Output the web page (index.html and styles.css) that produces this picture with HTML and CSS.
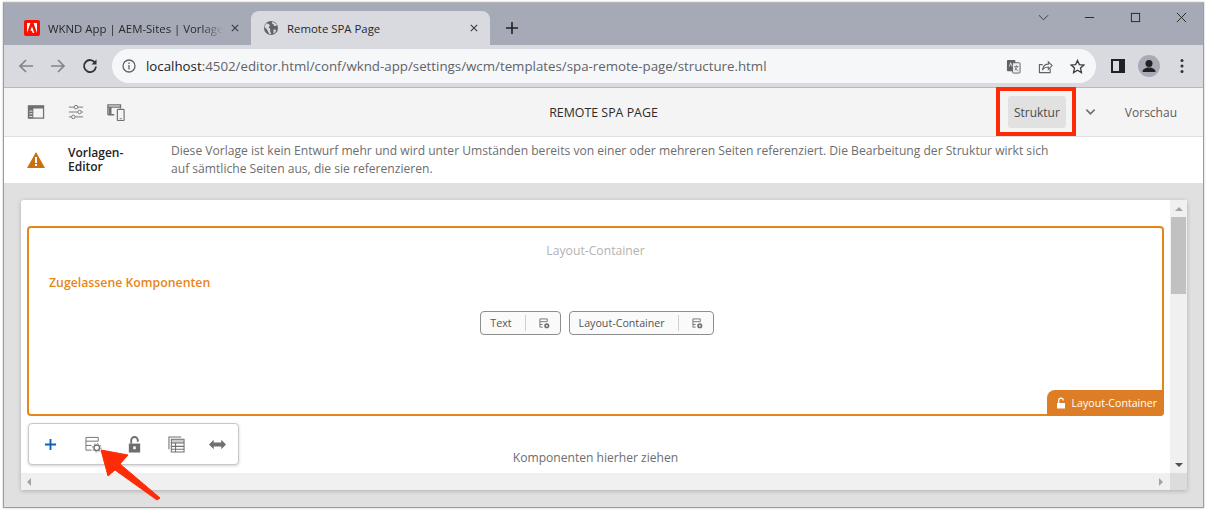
FILE: index.html
```html
<!DOCTYPE html>
<html lang="en">
<head>
    <meta charset="UTF-8">
    <meta name="viewport" content="width=device-width, initial-scale=1.0">
    <title>Remote SPA Page</title>
    <link rel="stylesheet" href="styles.css">
</head>
<body>
    <div class="window">
        <div class="tabstrip">
            <div class="tab">
                <svg class="favicon" viewBox="0 0 16 16"><rect width="16" height="16" rx="2" fill="#fa0f00"/><path d="M6.500 3H3v10zM9.500 3H13v10zM8 6.500l2.300 6.500H8.800L8 10.800H6.300z" fill="#fff"/></svg>
                <span class="tab-title tab-title-fade">WKND App | AEM-Sites | Vorlage</span>
                <svg class="tab-close" viewBox="0 0 10 10"><path d="M1 1l8 8M9 1L1 9" stroke="#3c4043" stroke-width="1.5"/></svg>
            </div>
            <div class="tab tab-active">
                <svg class="favicon" viewBox="0 0 16 16"><circle cx="8" cy="8" r="7" fill="#5f6368"/><path d="M3 3.500l2.500.3L7 5.600 5.600 7.400l1.600 1.400v2.800l1.200 2.600-2.200-.2L4 9.500 1.500 7zM9.500 1.500l-.7 2 1.500.6.7 1.800 2.200-.2L14 4.500zM10.500 9.500l2.700.3-1 2.700-1.700 1z" fill="#d9dae0"/></svg>
                <span class="tab-title">Remote SPA Page</span>
                <svg class="tab-close" viewBox="0 0 10 10"><path d="M1 1l8 8M9 1L1 9" stroke="#3c4043" stroke-width="1.5"/></svg>
            </div>
            <svg class="new-tab" viewBox="0 0 12 12"><path d="M6 0v12M0 6h12" stroke="#202124" stroke-width="1.600"/></svg>
            <div class="win-controls">
                <svg viewBox="0 0 12 12" class="win-chevron"><path d="M1 3.500l5 5 5-5" fill="none" stroke="#333" stroke-width="1"/></svg>
                <svg viewBox="0 0 12 12" class="win-min"><path d="M1 6h10" stroke="#222" stroke-width="1"/></svg>
                <svg viewBox="0 0 12 12" class="win-max"><rect x="1.500" y="1.500" width="9" height="9" fill="none" stroke="#222" stroke-width="1"/></svg>
                <svg viewBox="0 0 12 12" class="win-close"><path d="M1 1l10 10M11 1L1 11" stroke="#222" stroke-width="1"/></svg>
            </div>
        </div>

        <div class="browser-bar">
            <svg class="nav-icon" viewBox="0 0 16 16"><path d="M15 8H2M8 2L2 8l6 6" fill="none" stroke="#80868b" stroke-width="1.700"/></svg>
            <svg class="nav-icon" viewBox="0 0 16 16"><path d="M1 8h13M8 2l6 6-6 6" fill="none" stroke="#80868b" stroke-width="1.700"/></svg>
            <svg class="nav-icon" viewBox="0 0 16 16"><path d="M13.200 5A6 6 0 1 0 14 8.500" fill="none" stroke="#303134" stroke-width="1.800"/><path d="M14.500 1.500v5h-5z" fill="#303134"/></svg>
            <div class="omnibox">
                <svg class="info-icon" viewBox="0 0 14 14"><circle cx="7" cy="7" r="6" fill="none" stroke="#5f6368" stroke-width="1.300"/><path d="M7 6v4.500M7 3.500v1.500" stroke="#5f6368" stroke-width="1.300"/></svg>
                <span class="url"><b>localhost</b>:4502/editor.html/conf/wknd-app/settings/wcm/templates/spa-remote-page/structure.html</span>
                <div class="omni-actions">
                    <svg viewBox="0 0 16 16"><rect x="1" y="1" width="9" height="12" rx="1" fill="#5f6368"/><rect x="7" y="4" width="8" height="11" rx="1" fill="#eee" stroke="#5f6368"/><path d="M3.500 8l1.500-4 1.500 4" fill="none" stroke="#fff" stroke-width=".8"/><path d="M9 8h4M11 6.500v1M12.500 8l-3 4M9.500 8.500c.5 2 2 3.500 3.500 4" fill="none" stroke="#5f6368" stroke-width=".8"/></svg>
                    <svg viewBox="0 0 16 16"><path d="M13 10v4.500H1.500V6H5" fill="none" stroke="#5f6368" stroke-width="1.200"/><path d="M5 11c.5-3.500 3-5.500 6-5.500V3l4 4-4 4V8.500c-2.500 0-4.500.8-6 2.500z" fill="none" stroke="#5f6368" stroke-width="1.200"/></svg>
                    <svg viewBox="0 0 16 16"><path d="M8 1.500l2 4.500 4.800.5-3.600 3.200 1 4.800L8 12l-4.200 2.500 1-4.800L1.200 6.500 6 6z" fill="none" stroke="#3c4043" stroke-width="1.400"/></svg>
                </div>
            </div>
            <div class="browser-actions">
                <svg class="side-icon" viewBox="0 0 14 14"><path d="M0 0h14v14H0zM2 2v10h6V2z" fill="#202124" fill-rule="evenodd"/></svg>
                <svg class="avatar" viewBox="0 0 22 22"><circle cx="11" cy="11" r="11" fill="#a8abb6"/><circle cx="11" cy="8.500" r="3.500" fill="#202124"/><path d="M4.500 17c0-3 3-4.500 6.500-4.500s6.500 1.500 6.500 4.500z" fill="#202124"/></svg>
                <svg class="kebab" viewBox="0 0 4 16"><circle cx="2" cy="2.500" r="1.500" fill="#303134"/><circle cx="2" cy="8" r="1.500" fill="#303134"/><circle cx="2" cy="13.500" r="1.500" fill="#303134"/></svg>
            </div>
        </div>

        <div class="editor-bar">
            <div class="editor-tools">
                <svg viewBox="0 0 20 18" class="tool-panel"><path d="M1.500 2h17v14h-17z" fill="none" stroke="#707070" stroke-width="1.400"/><path d="M1.500 2h17v3h-17zM1.500 5h5.500v11h-5.500z" fill="#707070"/><path d="M2.500 8h3.500M2.500 11h3.500M2.500 14h3.500" stroke="#f4f4f4"/></svg>
                <svg viewBox="0 0 18 18" class="tool-sliders"><g fill="none" stroke="#707070" stroke-width="1"><path d="M1 3.500h6M11 3.500h6M1 9h10M15 9h2M1 14.500h3M8 14.500h9"/><circle cx="9" cy="3.500" r="2"/><circle cx="13" cy="9" r="2"/><circle cx="6" cy="14.500" r="2"/></g></svg>
                <svg viewBox="0 0 20 20" class="tool-devices"><path d="M1 13V2h14v4M1 2h14v2.500H1zM1 13h7" fill="none" stroke="#707070" stroke-width="1.500"/><rect x="11.500" y="7" width="7.500" height="12.500" rx="1" fill="#f4f4f4" stroke="#707070" stroke-width="1.300"/><path d="M14 17.500h2.500" stroke="#707070"/><path d="M2 4.500h3v8H2z" fill="#707070"/></svg>
            </div>
            <div class="editor-title">REMOTE SPA PAGE</div>
            <div class="editor-modes">
                <span class="mode mode-active">Struktur</span>
                <svg class="mode-chevron" viewBox="0 0 12 8"><path d="M1.500 1.500L6 6l4.500-4.500" fill="none" stroke="#6e6e6e" stroke-width="1.800"/></svg>
                <span class="mode">Vorschau</span>
            </div>
        </div>

        <div class="notice">
            <svg class="notice-icon" viewBox="0 0 18 16"><path d="M9 0l9 16H0z" fill="#cb6f10"/><path d="M9 5v6M9 12v2" stroke="#fff" stroke-width="2"/></svg>
            <div class="notice-title">Vorlagen-<br>Editor</div>
            <p class="notice-text">Diese Vorlage ist kein Entwurf mehr und wird unter Umständen bereits von einer oder mehreren Seiten referenziert. Die Bearbeitung der Struktur wirkt sich auf sämtliche Seiten aus, die sie referenzieren.</p>
        </div>

        <div class="workspace">
            <div class="panel">
                <div class="panel-main">
                    <div class="panel-content">
                        <div class="frame">
                            <div class="frame-title">Layout-Container</div>
                            <div class="allowed-title">Zugelassene Komponenten</div>
                            <div class="chips">
                                <div class="chip">
                                    <span class="chip-label">Text</span>
                                    <svg viewBox="0 0 12 12"><path d="M1 1h8M1 1v9h3M1 4h8M9 1v3M1 7h3" fill="none" stroke="#707070"/><circle cx="8.500" cy="8.500" r="2.800" fill="#707070"/><circle cx="8.500" cy="8.500" r="1" fill="#fff"/></svg>
                                </div>
                                <div class="chip">
                                    <span class="chip-label">Layout-Container</span>
                                    <svg viewBox="0 0 12 12"><path d="M1 1h8M1 1v9h3M1 4h8M9 1v3M1 7h3" fill="none" stroke="#707070"/><circle cx="8.500" cy="8.500" r="2.800" fill="#707070"/><circle cx="8.500" cy="8.500" r="1" fill="#fff"/></svg>
                                </div>
                            </div>
                            <div class="frame-tag">
                                <svg viewBox="0 0 10 12"><path d="M1 11.500h8V6H1z" fill="#fff"/><path d="M2.700 6V3.500a2.300 2.300 0 0 1 4.600 0" fill="none" stroke="#fff" stroke-width="1.200"/></svg>
                                Layout-Container
                            </div>
                        </div>
                        <div class="drop-hint">Komponenten hierher ziehen</div>
                        <div class="float-toolbar">
                            <svg class="ft-add" viewBox="0 0 14 14"><path d="M7 1v12M1 7h12" stroke="#1160b7" stroke-width="2"/></svg>
                            <svg class="ft-settings" viewBox="0 0 18 18"><g fill="none" stroke="#707070" stroke-width="1"><path d="M1 1.500h13M1 1.500V15h6M1 5.500h13M14 1.500v4M1 10h6"/></g><circle cx="12.500" cy="12.500" r="3" fill="none" stroke="#707070" stroke-width="1.500"/><circle cx="12.500" cy="12.500" r="4.500" fill="none" stroke="#707070" stroke-width="1" stroke-dasharray="1.400 2.100"/></svg>
                            <svg viewBox="0 0 14 18"><path d="M1 8h12v9.500H1z" fill="#6e6e6e"/><path d="M3.500 8V4.500a3.500 3.500 0 0 1 7 0V6" fill="none" stroke="#6e6e6e" stroke-width="2"/><rect x="5.700" y="11" width="2.600" height="3" fill="#fff"/></svg>
                            <svg viewBox="0 0 18 18"><g fill="none" stroke="#707070" stroke-width="1.100"><path d="M1 14V1h13"/><path d="M3.500 3.500h13.500V17H3.500zM3.500 7.500h13.500M3.500 11h13.500M3.500 14h13.500M8 7.500V17"/></g><path d="M3.500 3.500h13.500v4H3.500z" fill="#707070" opacity=".35"/></svg>
                            <svg class="ft-arrows" viewBox="0 0 18 10"><path d="M0 5l5-5v3h8V0l5 5-5 5V7H5v3z" fill="#707070"/></svg>
                        </div>
                    </div>
                    <div class="vscroll">
                        <span class="arrow-up"></span>
                        <div class="vthumb"></div>
                        <span class="arrow-down"></span>
                    </div>
                </div>
                <div class="hscroll-row">
                    <div class="hscroll">
                        <span class="arrow-left"></span>
                        <span class="arrow-right"></span>
                    </div>
                    <div class="scroll-corner"></div>
                </div>
            </div>
        </div>
    </div>

    <!-- annotations -->
    <div class="callout-box"></div>
    <svg class="callout-arrow" viewBox="0 0 62 52"><path d="M1 1L28 6 20 15 60 49 57 51 15 21 8 27z" fill="#fd2c06" stroke="#fd2c06" stroke-linejoin="round"/></svg>
</body>
</html>
```

FILE: styles.css
```css
* {
    box-sizing: border-box;
}
html, body {
    height: 100%;
}
body {
    margin: 0;
    background: #fff;
    font-family: "Open Sans", sans-serif;
    overflow: hidden;
    padding: 2px 4px 2px 3px;
    position: relative;
}
.window {
    height: 506px;
    display: flex;
    flex-direction: column;
    border: 1px solid #9c9c9c;
    border-top-color: #b4b4b4;
    box-shadow: 0 0 2px rgba(0, 0, 0, 0.25);
}

/* browser chrome */
.tabstrip {
    height: 42px;
    flex: none;
    background: #a6aab6;
    display: flex;
    align-items: flex-end;
    padding-left: 8px;
}
.tab {
    width: 239px;
    height: 34px;
    display: flex;
    align-items: center;
    padding: 0 12px 0 12px;
    font-size: 11.4px;
    color: #26282c;
    border-radius: 8px 8px 0 0;
}
.tab-active {
    background: #d9dae0;
}
.favicon {
    width: 16px;
    height: 16px;
    flex: none;
    margin-right: 8px;
}
.tab-title {
    flex: 1;
    white-space: nowrap;
}
.tab-title-fade {
    -webkit-mask-image: linear-gradient(to right, #000 88%, transparent 100%);
    mask-image: linear-gradient(to right, #000 88%, transparent 100%);
}
.tab-close {
    width: 8px;
    height: 8px;
    flex: none;
    margin-left: 8px;
}
.new-tab {
    width: 12px;
    height: 12px;
    margin: 0 0 11px 16px;
}
.win-controls {
    margin-left: auto;
    align-self: flex-start;
    display: flex;
    align-items: center;
    padding: 9px 16px 0 0;
}
.win-controls svg {
    width: 11px;
    height: 11px;
}
.win-chevron {
    margin-right: 35px;
}
.win-min {
    margin-right: 35px;
}
.win-max {
    margin-right: 35px;
}
.browser-bar {
    height: 43px;
    flex: none;
    background: #d9dae0;
    border-bottom: 1px solid #b9b9bb;
    display: flex;
    align-items: center;
    padding: 0 13px 0 14px;
}
.nav-icon {
    width: 16px;
    height: 16px;
    margin-right: 16px;
}
.omnibox {
    width: 984px;
    height: 34px;
    margin-left: -2px;
    background: #f6f7f9;
    border-radius: 17px;
    display: flex;
    align-items: center;
    padding: 0 10px;
}
.info-icon {
    width: 14px;
    height: 14px;
    margin-right: 10px;
}
.url {
    font-size: 13.3px;
    color: #5f6368;
    white-space: nowrap;
}
.url b {
    font-weight: 400;
    color: #202124;
}
.omni-actions {
    margin-left: auto;
    display: flex;
    gap: 17px;
    padding-right: 1px;
}
.omni-actions svg {
    width: 15px;
    height: 15px;
}
.browser-actions {
    display: flex;
    align-items: center;
    margin-left: 15px;
}
.side-icon {
    width: 14px;
    height: 14px;
}
.avatar {
    width: 22px;
    height: 22px;
    margin-left: 13px;
}
.kebab {
    width: 4px;
    height: 16px;
    margin-left: 20px;
}

/* editor bar */
.editor-bar {
    height: 49px;
    flex: none;
    background: #f4f4f4;
    border-bottom: 1px solid #e0e0e0;
    display: flex;
    align-items: center;
    position: relative;
    padding: 0 20px 0 23px;
}
.editor-tools {
    display: flex;
    align-items: center;
    gap: 23px;
}
.tool-panel {
    width: 18px;
    height: 16px;
}
.tool-sliders {
    width: 16px;
    height: 16px;
}
.tool-devices {
    width: 18px;
    height: 18px;
}
.editor-title {
    position: absolute;
    left: 0;
    right: 0;
    padding-top: 1px;
    text-align: center;
    font-size: 12.4px;
    color: #2c2c2c;
    pointer-events: none;
}
.editor-modes {
    margin-left: auto;
    display: flex;
    align-items: center;
    font-size: 12px;
    color: #5c5c5c;
}
.mode {
    display: block;
    padding: 0 6px;
    height: 32px;
    line-height: 34px;
}
.mode-active {
    background: #e1e1e1;
    border-radius: 3px;
    color: #4b4b4b;
}
.mode-chevron {
    width: 11px;
    height: 8px;
    margin: 0 23px 0 19px;
}

/* notice */
.notice {
    height: 46px;
    flex: none;
    background: #fff;
    display: flex;
    align-items: center;
    padding-left: 23px;
}
.notice-icon {
    width: 18px;
    height: 16px;
    flex: none;
}
.notice-title {
    width: 103px;
    margin-left: 23px;
    font-size: 12px;
    line-height: 14px;
    font-weight: 600;
    color: #222;
    flex: none;
}
.notice-text {
    margin: 0;
    width: 885px;
    font-size: 12.1px;
    line-height: 18px;
    color: #6e6e6e;
}

/* workspace */
.workspace {
    flex: 1;
    min-height: 0;
    background: #e0e0e0;
    padding: 17px;
}
.panel {
    height: 290px;
    width: 1166px;
    background: #fff;
    border-radius: 3px 3px 0 0;
    box-shadow: 0 1px 4px rgba(0, 0, 0, 0.22);
    display: flex;
    flex-direction: column;
}
.panel-main {
    flex: 1;
    min-height: 0;
    display: flex;
}
.panel-content {
    flex: 1;
    position: relative;
    padding: 26px 6px 0 6px;
    overflow: hidden;
}
.frame {
    height: 190px;
    border: 2px solid #e68619;
    border-radius: 4px;
    position: relative;
    padding-top: 14px;
}
.frame-title {
    text-align: center;
    font-size: 12.2px;
    color: #b3b3b3;
    line-height: 18px;
}
.allowed-title {
    margin: 14px 0 0 20px;
    font-size: 12.3px;
    font-weight: 600;
    color: #e68619;
    line-height: 18px;
}
.chips {
    display: flex;
    justify-content: center;
    gap: 8px;
    margin-top: 19px;
    padding-left: 3px;
}
.chip {
    height: 24px;
    display: flex;
    align-items: center;
    border: 1px solid #8e8e8e;
    border-radius: 4px;
    background: #fafafa;
    font-size: 10.7px;
    color: #555;
    padding: 0 10px 0 9px;
}
.chip-label {
    padding-right: 13px;
    border-right: 1px solid #cfcfcf;
    line-height: 16px;
    margin-right: 13px;
}
.chip svg {
    width: 11px;
    height: 11px;
}
.frame-tag {
    position: absolute;
    right: -2px;
    bottom: -2px;
    height: 26px;
    padding: 0 7px 0 9px;
    display: flex;
    align-items: center;
    gap: 6px;
    background: #dd7e26;
    color: #fff;
    font-size: 10.6px;
    border-radius: 8px 0 4px 0;
}
.frame-tag svg {
    width: 10px;
    height: 12px;
}
.drop-hint {
    margin-top: 34px;
    text-align: center;
    font-size: 12.1px;
    color: #6e6e6e;
    line-height: 16px;
}
.float-toolbar {
    position: absolute;
    left: 7px;
    top: 223px;
    width: 211px;
    height: 42px;
    background: #fff;
    border: 1px solid #c8c8c8;
    border-radius: 4px;
    box-shadow: 0 1px 3px rgba(0, 0, 0, 0.18);
    display: grid;
    grid-template-columns: repeat(5, 42px);
    align-items: center;
    justify-items: center;
}
.float-toolbar svg {
    width: 17px;
    height: 17px;
}
.float-toolbar .ft-add {
    width: 13px;
    height: 13px;
}
.float-toolbar .ft-settings {
    margin-left: 2px;
}
.float-toolbar .ft-arrows {
    margin-right: 2px;
}

/* fake scrollbars */
.vscroll {
    width: 17px;
    flex: none;
    background: #f0f0f0;
    display: flex;
    flex-direction: column;
    align-items: center;
    padding-top: 7px;
}
.vthumb {
    width: 15px;
    height: 77px;
    background: #c1c1c1;
    margin-top: 6px;
}
.arrow-up {
    border: 4px solid transparent;
    border-top: 0;
    border-bottom: 4px solid #a3a3a3;
}
.arrow-down {
    margin-top: auto;
    margin-bottom: 6px;
    border: 4px solid transparent;
    border-bottom: 0;
    border-top: 4px solid #505050;
}
.hscroll-row {
    height: 17px;
    flex: none;
    display: flex;
}
.hscroll {
    flex: 1;
    background: #f0f0f0;
    display: flex;
    align-items: center;
    justify-content: space-between;
    padding: 0 7px 0 6px;
}
.arrow-left {
    border: 4px solid transparent;
    border-left: 0;
    border-right: 4px solid #a3a3a3;
}
.arrow-right {
    border: 4px solid transparent;
    border-right: 0;
    border-left: 4px solid #a3a3a3;
}
.scroll-corner {
    width: 17px;
    background: #dcdcdc;
}

/* red annotations */
.callout-box {
    position: absolute;
    left: 996px;
    top: 87px;
    width: 80px;
    height: 49px;
    border: 4px solid #fd2c06;
}
.callout-arrow {
    position: absolute;
    left: 100px;
    top: 449px;
    width: 62px;
    height: 52px;
}
```
